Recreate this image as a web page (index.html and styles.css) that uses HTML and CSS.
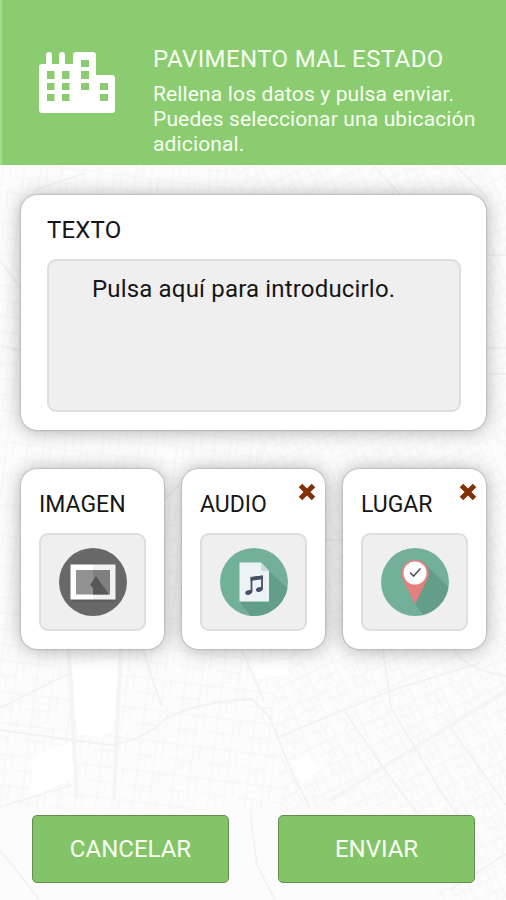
FILE: index.html
```html
<!DOCTYPE html>
<html lang="es">
<head>
<meta charset="utf-8">
<meta name="viewport" content="width=device-width">
<title>Pavimento mal estado</title>
<link rel="stylesheet" href="styles.css">
</head>
<body>
<svg class="map" viewBox="0 0 506 900" aria-hidden="true">
  <defs>
    <pattern id="blocks" width="29" height="23" patternUnits="userSpaceOnUse" patternTransform="rotate(-25)">
      <path d="M0 5H29M0 15H22M5 0V15M14 5V23M22 0V23M9 15V23"/>
    </pattern>
    <pattern id="streets" width="37" height="31" patternUnits="userSpaceOnUse" patternTransform="rotate(7)">
      <path d="M0 4H37M0 19H24M8 0V31M24 4V31M31 0V19M15 19V31"/>
    </pattern>
  </defs>
  <path fill="url(#streets)" d="M0 165H235L285 810H0z"/>
  <path fill="url(#blocks)" d="M235 165H506V900H440L400 810H285z"/>
  <path class="open" d="M72 665L119 658 113 730 101 737 77 733zM33 755L72 742 73 778 30 798zM293 762L307 754 322 768 302 784zM251 665L288 659 287 674 257 679z"/>
  <path class="avenue" d="M68 640L77 798M121 640L114 800M329 801L506 691"/>
  <path class="road" d="M0 730Q55 738 110 745Q145 740 165 719Q200 701 252 699L269 716 293 775 310 808M239 643L264 701M143 650L161 705M0 708L68 674M278 737L395 689 480 663M383 650L391 708 440 790 465 825M454 650Q467 670 506 676M345 712L392 780 430 830M450 727L506 805M250 810L257 865 275 900M0 807L72 785M450 890L506 854M0 850L40 900M0 260L22 290M0 345L21 351M488 255H506M488 348H506M488 374H506M374 166L400 194M455 165L488 198M35 190L85 173M164 500L182 482M326 540H343"/>
</svg>
<div class="screen">
  <header class="header">
    <svg class="city" viewBox="0 0 76 62" aria-hidden="true">
      <path fill="#fff" fill-rule="evenodd" d="M3 12H7V3Q7 0 10 0T13 3V12H20V3Q20 0 23 0T26 3V12H34V3Q34 0 37 0H54Q57 0 57 3V23H73Q76 23 76 26V58Q76 61 73 61H3Q0 61 0 58V15Q0 12 3 12zM8 19V27H15.500V19zM23 19V27H30.500V19zM8 31V38H15.500V31zM23 31V38H30.500V31zM8 42V49H15.500V42zM23 42V49H30.500V42zM42 8V15H50V8zM42 19V27H50V19zM42 31V38H50V31zM61 31V38H69V31zM61 42V49H69V42z"/>
    </svg>
    <div class="intro">
      <h1 class="title">PAVIMENTO MAL ESTADO</h1>
      <p class="description">Rellena los datos y pulsa enviar.<br>Puedes seleccionar una ubicación<br>adicional.</p>
    </div>
  </header>
  <main class="content">
    <section class="card text-card">
      <h2 class="label">TEXTO</h2>
      <div class="field text-field">Pulsa aquí para introducirlo.</div>
    </section>
    <div class="attachments">
      <section class="card attachment">
        <h2 class="label">IMAGEN</h2>
        <div class="field icon-field">
          <svg class="icon" viewBox="0 0 68 68" aria-hidden="true">
            <circle cx="34" cy="34" r="34" fill="#686868"/>
            <path fill="#5c5c5c" d="M11.500 51.500H56.500V54H14z"/>
            <path fill="#fff" d="M11.500 16.500H34V51.500H11.500z"/>
            <path fill="#f1f1f1" d="M34 16.500H56.500V51.500H34z"/>
            <path fill="#929292" d="M17 22H34V46.500H17z"/>
            <path fill="#808080" d="M34 22H51V46.500H34z"/>
            <path fill="#585858" d="M31 37L37 28 50 46.500H34V40z"/>
          </svg>
        </div>
      </section>
      <section class="card attachment">
        <h2 class="label">AUDIO</h2>
        <svg class="remove" viewBox="0 0 20 20" aria-hidden="true"><path d="M3.500 3.500L16.500 16.500M16.500 3.500L3.500 16.500"/></svg>
        <div class="field icon-field">
          <svg class="icon" viewBox="0 0 68 68" aria-hidden="true">
            <circle cx="34" cy="34" r="34" fill="#72b09a"/>
            <path fill="#629e8a" d="M48 22L67.500 40A34 34 0 0 1 30 67.700L19.500 53.500H48z"/>
            <path fill="#edf3f5" d="M19.500 14.500H41L49 23V53.500H19.500z"/>
            <path fill="#cbdbdc" d="M41 14.500V23H49z"/>
            <path fill="none" stroke="#455166" stroke-width="1.800" d="M31.500 44V30L42 28.500V41"/>
            <path fill="#455166" d="M30.600 29L42.900 27.500V31L30.600 33z"/>
            <ellipse cx="28.700" cy="44.500" rx="3.500" ry="2.200" fill="#455166" transform="rotate(-15 28.700 44.500)"/>
            <ellipse cx="39.400" cy="41.500" rx="3.500" ry="2.200" fill="#455166" transform="rotate(-15 39.400 41.500)"/>
          </svg>
        </div>
      </section>
      <section class="card attachment">
        <h2 class="label">LUGAR</h2>
        <svg class="remove" viewBox="0 0 20 20" aria-hidden="true"><path d="M3.500 3.500L16.500 16.500M16.500 3.500L3.500 16.500"/></svg>
        <div class="field icon-field">
          <svg class="icon" viewBox="0 0 68 68" aria-hidden="true">
            <circle cx="34" cy="34" r="34" fill="#72b09a"/>
            <path fill="#629e8a" d="M44 16L67.200 39A34 34 0 0 1 42 67L34 56z"/>
            <path fill="#e57f7d" d="M34 56L22 32A13.700 13.700 0 1 1 46 32z"/>
            <circle cx="34" cy="25" r="11.500" fill="#fff"/>
            <path fill="none" stroke="#555" stroke-width="1.600" d="M29 24.500L32.500 28 39.500 20.500"/>
          </svg>
        </div>
      </section>
    </div>
  </main>
  <footer class="actions">
    <button class="button" type="button">CANCELAR</button>
    <button class="button" type="button">ENVIAR</button>
  </footer>
</div>
</body>
</html>
```
FILE: styles.css
```css
* { box-sizing: border-box; }
body { margin: 0; background: #fcfcfc; font-family: Roboto, "Liberation Sans", sans-serif; }
h1, h2, p { margin: 0; font-weight: 400; }
.map { position: absolute; inset: 0; width: 506px; height: 900px; fill: none; }
.map pattern path { stroke: #f8f8f8; stroke-width: 1.8; }
.map .open { fill: #fff; }
.map .avenue { stroke: #f5f5f5; stroke-width: 4; }
.map .road { stroke: #f2f2f2; stroke-width: 1.8; }
.screen { position: relative; display: flex; flex-direction: column; width: 506px; height: 900px; overflow: hidden; }
.header { display: flex; height: 165px; padding: 45px 0 0 37px; background: #8bcc70; border-left: 2px solid #a4dc8e; color: #f7fff2; }
.city { width: 76px; height: 62px; margin-top: 7px; flex: none; }
.intro { margin-left: 38px; white-space: nowrap; }
.title { font-size: 24px; line-height: 28px; letter-spacing: .4px; }
.description { margin-top: 9px; font-size: 21px; line-height: 25px; letter-spacing: .14px; }
.content { padding: 30px 20px 0 21px; }
.card { background: #fff; border-radius: 16px; box-shadow: 0 0 2px rgba(0,0,0,.38), 0 1px 20px rgba(0,0,0,.32); color: #161616; }
.text-card { height: 235px; padding: 21px 25px 0 26px; }
.label { font-size: 24px; line-height: 28px; }
.text-card .label { letter-spacing: .2px; }
.field { background: #f0eff0; border: 2px solid #dedede; border-radius: 9px; }
.text-field { height: 153px; margin-top: 15px; padding: 14px 0 0 43px; font-size: 24px; line-height: 29px; letter-spacing: .17px; white-space: nowrap; }
.attachments { display: grid; grid-template-columns: repeat(3, 143px); justify-content: space-between; margin-top: 39px; }
.attachment { position: relative; height: 180px; padding: 22px 18px 0; }
.attachment .label { font-size: 23px; }
.icon-field { display: flex; align-items: center; justify-content: center; height: 98px; margin-top: 14px; }
.icon { width: 68px; height: 68px; }
.remove { position: absolute; top: 13px; right: 8px; width: 20px; height: 20px; fill: none; stroke: #813209; stroke-width: 5; }
.actions { display: flex; justify-content: space-between; margin-top: auto; padding: 0 31px 17px 32px; }
.button { width: 197px; height: 68px; padding: 0; border: 1px solid #648e4e; border-radius: 5px; background: #84c469; color: #f8fff3; font: 24px Roboto, sans-serif; }
```
